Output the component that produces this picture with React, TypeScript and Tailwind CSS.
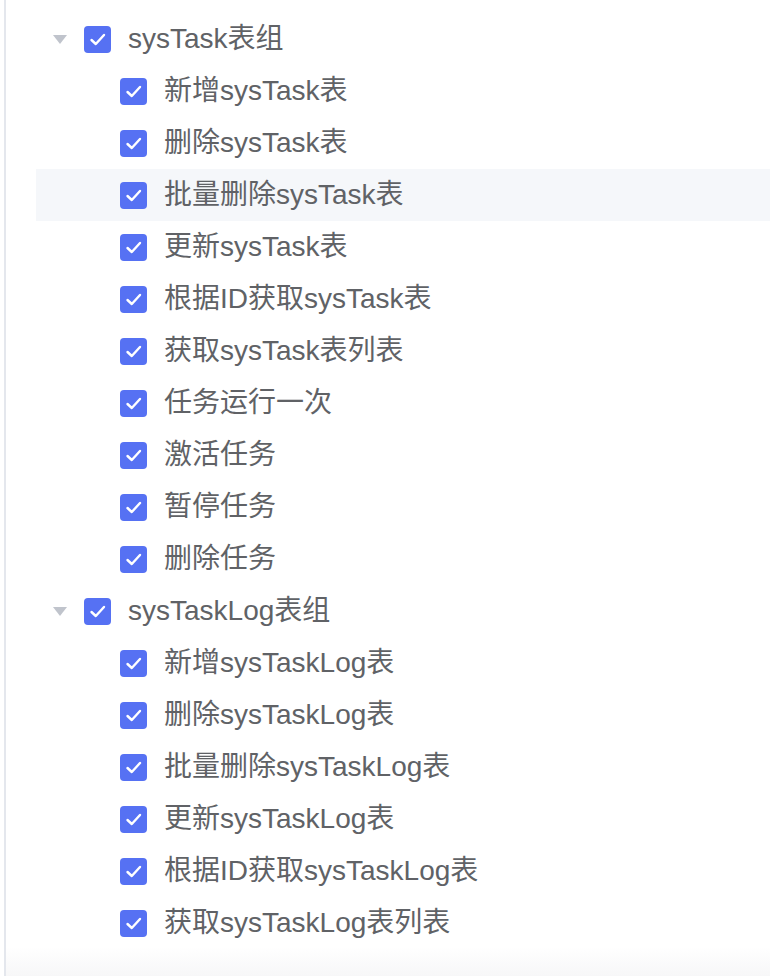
import React from 'react';

type Group = { label: string; children: string[] };

const groups: Group[] = [
  {
    label: 'sysTask表组',
    children: [
      '新增sysTask表',
      '删除sysTask表',
      '批量删除sysTask表',
      '更新sysTask表',
      '根据ID获取sysTask表',
      '获取sysTask表列表',
      '任务运行一次',
      '激活任务',
      '暂停任务',
      '删除任务',
    ],
  },
  {
    label: 'sysTaskLog表组',
    children: [
      '新增sysTaskLog表',
      '删除sysTaskLog表',
      '批量删除sysTaskLog表',
      '更新sysTaskLog表',
      '根据ID获取sysTaskLog表',
      '获取sysTaskLog表列表',
    ],
  },
];

function Checkbox() {
  return (
    <span className="flex h-[27px] w-[27px] shrink-0 items-center justify-center rounded-[4px] bg-[#5671f3]">
      <svg width="27" height="27" viewBox="0 0 27 27">
        <path d="M7.5 14 L11.8 18 L20 9" fill="none" stroke="#fff" strokeWidth="2.4" strokeLinecap="round" strokeLinejoin="round" />
      </svg>
    </span>
  );
}

function Row({ label, level, hovered }: { label: string; level: number; hovered?: boolean }) {
  return (
    <div className={`flex h-[52px] items-center ${hovered ? 'bg-[#f5f7fa]' : ''}`}>
      {level === 0 ? (
        <span className="ml-[17px] mr-[17px] flex w-[14px] justify-center">
          <svg width="14" height="9" viewBox="0 0 14 9">
            <path d="M0 0 H14 L7 9 Z" fill="#c0c4cc" />
          </svg>
        </span>
      ) : (
        <span className="w-[84px] shrink-0" />
      )}
      <Checkbox />
      <span className="ml-[17px] text-[28px] leading-none text-[#606266]">{label}</span>
    </div>
  );
}

export default function App() {
  let idx = 0;
  return (
    <div
      className="relative h-[976px] w-[770px] overflow-hidden bg-white"
      style={{ fontFamily: '"Liberation Sans", "Noto Sans CJK SC", sans-serif' }}
    >
      <div className="ml-[4px] h-full border-l-2 border-[#e4e7ed] bg-gradient-to-b from-white from-[97%] to-[#f7f7f8]">
        <div className="pl-[30px] pt-[13px]">
          {groups.map((g) => {
            idx++;
            return (
              <div key={g.label}>
                <Row label={g.label} level={0} />
                {g.children.map((c) => {
                  const i = idx++;
                  return <Row key={c} label={c} level={1} hovered={i === 3} />;
                })}
              </div>
            );
          })}
        </div>
      </div>
    </div>
  );
}
